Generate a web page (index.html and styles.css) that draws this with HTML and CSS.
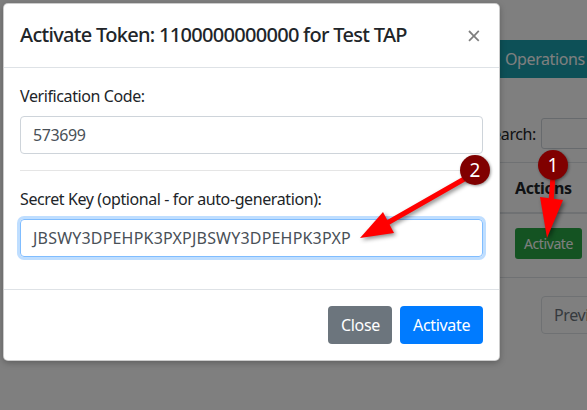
FILE: index.html
```html
<!DOCTYPE html>
<html>
<head>
<meta charset="utf-8">
<link rel="stylesheet" href="styles.css">
</head>
<body>
<div class="page">
  <div class="bgcol">
    <div class="tabbar"><span class="tab">Operations</span></div>
    <div class="search"><label class="search-label">Search:</label><span class="search-input"></span></div>
    <div class="thead"><span class="th">Actions</span></div>
    <div class="trow"><span class="btn-green">Activate</span></div>
    <div class="pager"><span class="btn-prev">Previous</span></div>
  </div>
</div>
<div class="backdrop"></div>
<div class="modal">
  <div class="modal-header">
    <h5 class="modal-title">Activate Token: 1100000000000 for Test TAP</h5>
    <button class="close">×</button>
  </div>
  <div class="modal-body">
    <div class="form-group">
      <label class="lbl">Verification Code:</label>
      <div class="form-control">573699</div>
    </div>
    <hr class="sep">
    <div class="form-group">
      <label class="lbl">Secret Key (optional - for auto-generation):</label>
      <div class="form-control focus key">JBSWY3DPEHPK3PXPJBSWY3DPEHPK3PXP</div>
    </div>
  </div>
  <div class="modal-footer">
    <button class="btn btn-secondary">Close</button>
    <button class="btn btn-primary">Activate</button>
  </div>
</div>
<svg class="arrows" width="587" height="410" viewBox="0 0 587 410">
  <g class="arrow">
    <line x1="466" y1="178" x2="382" y2="226" stroke="#ff0000" stroke-width="5" stroke-linecap="round"/>
    <polygon points="360,238 383,212 394,233" fill="#ff0000"/>
  </g>
  <g class="arrow">
    <line x1="553" y1="176" x2="551" y2="202" stroke="#ff0000" stroke-width="5" stroke-linecap="round"/>
    <polygon points="547,238 540,197 563,200" fill="#ff0000"/>
  </g>
</svg>
<span class="badge b2">2</span>
<span class="badge b1">1</span>
</body>
</html>
```
FILE: styles.css
```css
* { box-sizing: border-box; }
html, body { margin: 0; padding: 0; }
body {
  width: 587px;
  height: 410px;
  overflow: hidden;
  background: #ffffff;
  font-family: "Noto Sans", "Open Sans", sans-serif;
  font-size: 16px;
  letter-spacing: -0.025em;
  color: #212529;
  position: relative;
}
.page { padding-top: 40px; }
.bgcol { margin-left: 440px; width: 147px; overflow: hidden; }
.tabbar {
  height: 38px;
  background: #1aa0ae;
  padding-left: 65px;
  line-height: 38px;
  color: #ffffff;
  white-space: nowrap;
}
.search {
  margin-top: 40px;
  padding-left: 42px;
  display: flex;
  align-items: center;
  gap: 5px;
  height: 31px;
}
.search-label { width: 54px; flex: none; text-align: right; font-size: 16px; }
.search-input {
  display: block;
  flex: none;
  width: 100px;
  height: 31px;
  border: 1px solid #ced4da;
  border-radius: 3px;
}
.thead {
  margin-top: 13px;
  border-top: 1px solid #dee2e6;
  border-bottom: 2px solid #dee2e6;
  height: 52px;
  padding-left: 75px;
  display: flex;
  align-items: center;
}
.th { font-weight: 700; }
.trow {
  padding-top: 14px;
  padding-left: 75px;
  height: 64px;
  border-bottom: 1px solid #dee2e6;
}
.btn-green {
  display: inline-flex;
  align-items: center;
  justify-content: center;
  width: 67px;
  height: 31px;
  background: #28a745;
  color: #ffffff;
  border-radius: 3px;
  font-size: 14px;
}
.pager { margin-top: 18px; padding-left: 101px; white-space: nowrap; }
.btn-prev {
  display: inline-flex;
  align-items: center;
  padding: 0 12px;
  height: 38px;
  border: 1px solid #dee2e6;
  border-radius: 4px;
  color: #6c757d;
}
.backdrop {
  position: absolute;
  inset: 0;
  background: rgba(0, 0, 0, 0.5);
}
.modal {
  position: absolute;
  left: 3px;
  top: 3px;
  width: 497px;
  background: #ffffff;
  border: 1px solid rgba(0, 0, 0, 0.2);
  border-radius: 5px;
  box-shadow: 0 2px 6px rgba(0, 0, 0, 0.25);
}
.modal-header {
  display: flex;
  align-items: flex-start;
  justify-content: space-between;
  padding: 16px 16px 17px;
  border-bottom: 1px solid #dee2e6;
}
.modal-title {
  margin: 0;
  font-size: 20px;
  font-weight: 500;
  line-height: 30px;
  letter-spacing: -0.035em;
  color: #212529;
}
.close {
  margin: -16px -16px -16px auto;
  padding: 16px 18px 16px 16px;
  background: transparent;
  border: 0;
  font-family: "Noto Sans", sans-serif;
  font-size: 25px;
  font-weight: 400;
  line-height: 30px;
  color: #000;
  opacity: 0.5;
}
.modal-body { padding: 16px; }
.form-group { margin-bottom: 16px; }
.lbl { display: block; margin-bottom: 8px; line-height: 24px; }
.form-control {
  height: 38px;
  padding: 6px 12px;
  line-height: 24px;
  color: #495057;
  border: 1px solid #ced4da;
  border-radius: 4px;
  white-space: nowrap;
  overflow: hidden;
}
.form-control.key { letter-spacing: 0.012em; }
.form-control.focus {
  border-color: #80bdff;
  box-shadow: 0 0 0 3px rgba(0, 123, 255, 0.25);
}
.sep {
  margin: 16px 0;
  border: 0;
  border-top: 1px solid rgba(0, 0, 0, 0.1);
}
.modal-footer {
  display: flex;
  justify-content: flex-end;
  align-items: center;
  padding: 12px;
  border-top: 1px solid #dee2e6;
  border-radius: 0 0 5px 5px;
}
.btn {
  margin: 4px;
  height: 38px;
  padding: 0 12px;
  border: 1px solid transparent;
  border-radius: 4px;
  font-family: "Noto Sans", sans-serif;
  font-size: 16px;
  letter-spacing: -0.02em;
  color: #ffffff;
}
.btn-secondary { background: #6c757d; width: 64px; }
.btn-primary { background: #007bff; width: 83px; }
.arrows {
  position: absolute;
  left: 0;
  top: 0;
}
.arrow { filter: drop-shadow(2px 2px 2px rgba(0, 0, 0, 0.45)); }
.badge {
  position: absolute;
  width: 30px;
  height: 30px;
  border-radius: 50%;
  background: #800000;
  color: #ffffff;
  font-size: 19px;
  line-height: 30px;
  text-align: center;
  letter-spacing: 0;
  box-shadow: 1px 1px 3px rgba(0, 0, 0, 0.4);
}
.b2 { left: 460px; top: 155px; }
.b1 { left: 538px; top: 150px; }
```
